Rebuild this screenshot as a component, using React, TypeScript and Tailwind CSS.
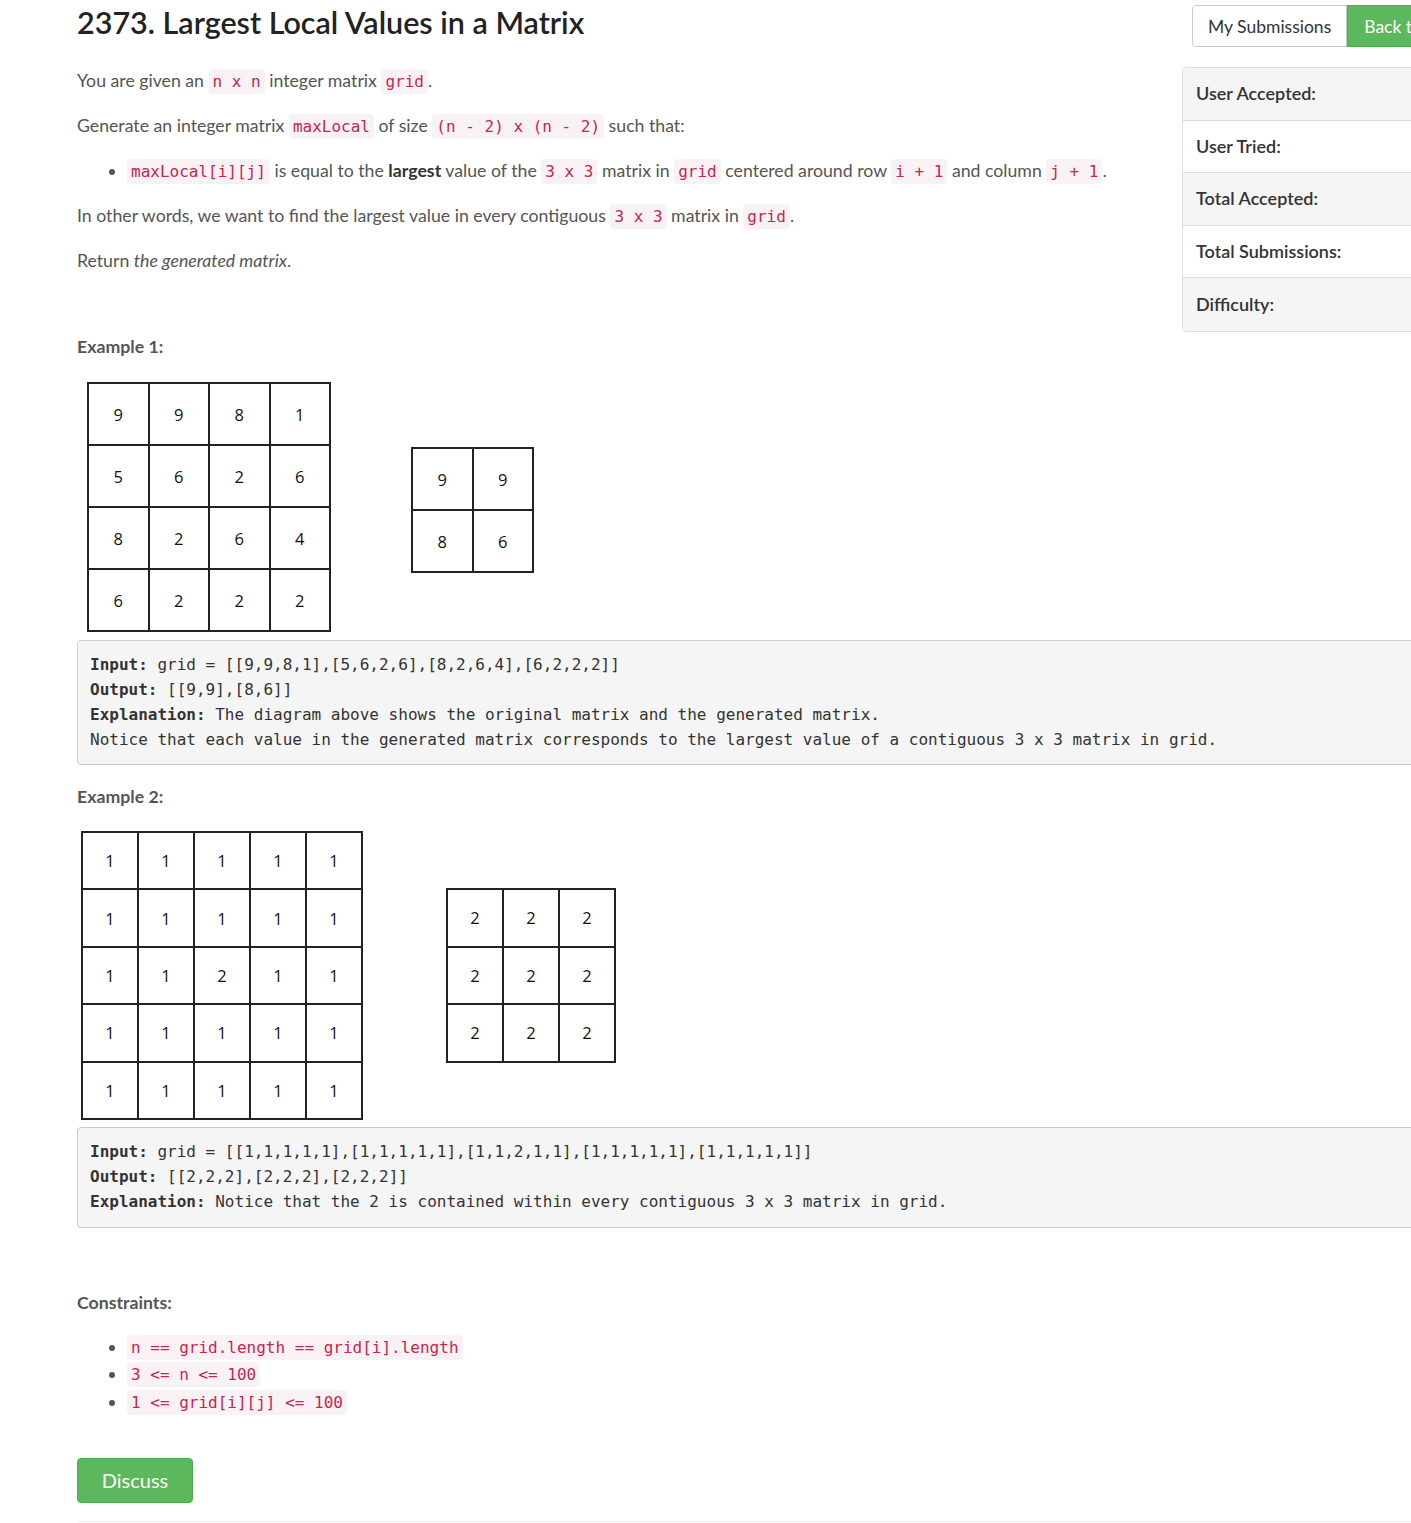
import React from "react";

const Code = ({ children }: { children: React.ReactNode }) => (
  <code className="rounded-[4px] bg-[#f9f2f4] px-[4px] py-[3px] font-['DejaVu_Sans_Mono',monospace] text-[16px] leading-none text-[#c7254e]">
    {children}
  </code>
);

const Matrix = ({
  data,
  cellW,
  cellH,
}: {
  data: number[][];
  cellW: number;
  cellH: number;
}) => (
  <div className="inline-flex flex-col border-l-2 border-t-2 border-[#222]">
    {data.map((row, i) => (
      <div key={i} className="flex">
        {row.map((v, j) => (
          <div
            key={j}
            className="flex items-center justify-center border-b-2 border-r-2 border-[#222] font-['Open_Sans',sans-serif] text-[16.5px] text-[#111]"
            style={{ width: cellW, height: cellH }}
          >
            {v}
          </div>
        ))}
      </div>
    ))}
  </div>
);

const rows = [
  { label: "User Accepted:", gray: true },
  { label: "User Tried:", gray: false },
  { label: "Total Accepted:", gray: true },
  { label: "Total Submissions:", gray: false },
  { label: "Difficulty:", gray: true },
];

export default function App() {
  return (
    <div className="w-[1411px] overflow-hidden bg-white font-['Lato',sans-serif] text-[17.7px] text-[#555]">
      <div className="ml-[77px] w-[1420px]">
        <aside className="float-right w-[315px] pt-[5px]">
          <div className="ml-[10px] flex h-[42px] text-[17.5px]">
            <div className="flex items-center rounded-l-[4px] border border-[#ccc] bg-white px-[15px] pt-[2px] text-[#333] whitespace-nowrap">
              My Submissions
            </div>
            <div className="flex items-center border border-[#4cae4c] bg-[#5cb85c] px-[16px] pt-[2px] text-white whitespace-nowrap">
              Back to Contest
            </div>
          </div>
          <div className="mt-[20px] overflow-hidden rounded-[4px] border border-[#ddd]">
            {rows.map((r, i) => (
              <div
                key={r.label}
                className={`flex h-[52.5px] items-center pl-[13px] text-[18px] font-semibold text-[#333] ${
                  r.gray ? "bg-[#f5f5f5]" : "bg-white"
                } ${i < rows.length - 1 ? "border-b border-[#ddd]" : ""}`}
              >
                {r.label}
              </div>
            ))}
          </div>
        </aside>

        <h1 className="pt-[1px] text-[30.5px] font-semibold leading-[42px] text-[#222]">
          2373. Largest Local Values in a Matrix
        </h1>

        <div className="mt-[23px] leading-[29px]">
          <p className="mb-[16px]">
            You are given an <Code>n x n</Code> integer matrix <Code>grid</Code>.
          </p>
          <p className="mb-[16px]">
            Generate an integer matrix <Code>maxLocal</Code> of size{" "}
            <Code>(n - 2) x (n - 2)</Code> such that:
          </p>
          <ul className="mb-[16px] list-disc pl-[50px]">
            <li>
              <Code>maxLocal[i][j]</Code> is equal to the{" "}
              <strong className="font-bold text-[#333]">largest</strong> value of the{" "}
              <Code>3 x 3</Code> matrix in <Code>grid</Code> centered around row{" "}
              <Code>i + 1</Code> and column <Code>j + 1</Code>.
            </li>
          </ul>
          <p className="mb-[16px]">
            In other words, we want to find the largest value in every contiguous{" "}
            <Code>3 x 3</Code> matrix in <Code>grid</Code>.
          </p>
          <p className="mb-[16px]">
            Return <em className="italic">the generated matrix</em>.
          </p>

          <p className="mt-[57px] font-bold text-[#555]">Example 1:</p>
          <div className="mt-[21px] flex items-center">
            <div className="ml-[10px]">
              <Matrix
                data={[
                  [9, 9, 8, 1],
                  [5, 6, 2, 6],
                  [8, 2, 6, 4],
                  [6, 2, 2, 2],
                ]}
                cellW={60.5}
                cellH={62}
              />
            </div>
            <div className="ml-[80px] pt-[6px]">
              <Matrix
                data={[
                  [9, 9],
                  [8, 6],
                ]}
                cellW={60.5}
                cellH={62}
              />
            </div>
          </div>
          <pre className="mt-[8px] rounded-[4px] border border-[#ccc] bg-[#f5f5f5] pb-[12px] pl-[12px] pt-[11px] font-['DejaVu_Sans_Mono',monospace] text-[16px] leading-[25px] text-[#333]">
            <strong className="font-bold">Input:</strong> grid = [[9,9,8,1],[5,6,2,6],[8,2,6,4],[6,2,2,2]]
            {"\n"}
            <strong className="font-bold">Output:</strong> [[9,9],[8,6]]
            {"\n"}
            <strong className="font-bold">Explanation:</strong> The diagram above shows the original matrix and the generated matrix.
            {"\n"}Notice that each value in the generated matrix corresponds to the largest value of a contiguous 3 x 3 matrix in grid.
          </pre>

          <p className="mt-[17px] font-bold text-[#555]">Example 2:</p>
          <div className="mt-[20px] flex items-center">
            <div className="ml-[4px]">
              <Matrix
                data={[
                  [1, 1, 1, 1, 1],
                  [1, 1, 1, 1, 1],
                  [1, 1, 2, 1, 1],
                  [1, 1, 1, 1, 1],
                  [1, 1, 1, 1, 1],
                ]}
                cellW={56}
                cellH={57.4}
              />
            </div>
            <div className="ml-[83px]">
              <Matrix
                data={[
                  [2, 2, 2],
                  [2, 2, 2],
                  [2, 2, 2],
                ]}
                cellW={56}
                cellH={57.5}
              />
            </div>
          </div>
          <pre className="mt-[7px] rounded-[4px] border border-[#ccc] bg-[#f5f5f5] pb-[13px] pl-[12px] pt-[11px] font-['DejaVu_Sans_Mono',monospace] text-[16px] leading-[25px] text-[#333]">
            <strong className="font-bold">Input:</strong> grid = [[1,1,1,1,1],[1,1,1,1,1],[1,1,2,1,1],[1,1,1,1,1],[1,1,1,1,1]]
            {"\n"}
            <strong className="font-bold">Output:</strong> [[2,2,2],[2,2,2],[2,2,2]]
            {"\n"}
            <strong className="font-bold">Explanation:</strong> Notice that the 2 is contained within every contiguous 3 x 3 matrix in grid.
          </pre>

          <p className="mt-[60px] font-bold text-[#555]">Constraints:</p>
          <ul className="mt-[16px] list-disc pl-[50px] leading-[27.5px]">
            <li>
              <Code>n == grid.length == grid[i].length</Code>
            </li>
            <li>
              <Code>3 &lt;= n &lt;= 100</Code>
            </li>
            <li>
              <Code>1 &lt;= grid[i][j] &lt;= 100</Code>
            </li>
          </ul>

          <div className="mt-[43px] flex h-[45px] w-[116px] items-center justify-center rounded-[4px] border border-[#4cae4c] bg-[#5cb85c] text-[20px] text-white">
            Discuss
          </div>
          <div className="mt-[18px] border-t border-[#eee]" />
          <div className="h-[2px]" />
        </div>
      </div>
    </div>
  );
}
